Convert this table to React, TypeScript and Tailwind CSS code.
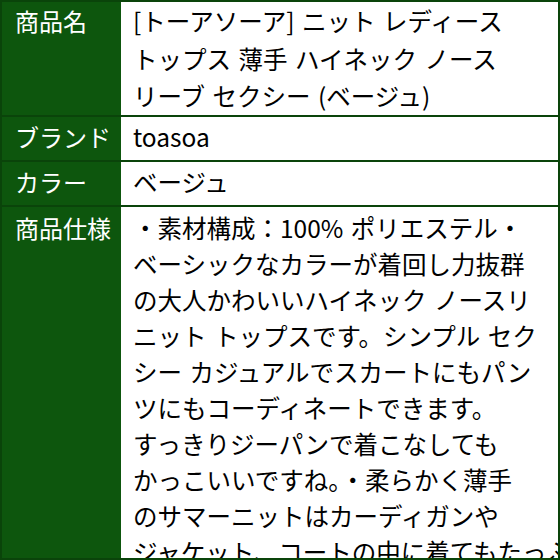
const rows: { label: string; lines: string[]; lead: string; pad: string }[] = [
  {
    label: '商品名',
    lines: ['[トーアソーア] ニット レディース', 'トップス 薄手 ハイネック ノース', 'リーブ セクシー (ベージュ)'],
    lead: 'leading-[37.5px]',
    pad: 'py-0',
  },
  { label: 'ブランド', lines: ['toasoa'], lead: 'leading-[37px]', pad: 'pt-[1px] pb-[5px]' },
  { label: 'カラー', lines: ['ベージュ'], lead: 'leading-[37px]', pad: 'pt-[1px] pb-[5px]' },
  {
    label: '商品仕様',
    lines: [
      '・素材構成：100% ポリエステル・',
      'ベーシックなカラーが着回し力抜群',
      'の大人かわいいハイネック ノースリ',
      'ニット トップスです。シンプル セク',
      'シー カジュアルでスカートにもパン',
      'ツにもコーディネートできます。',
      'すっきりジーパンで着こなしても',
      'かっこいいですね。・柔らかく薄手',
      'のサマーニットはカーディガンや',
      'ジャケット、コートの中に着てもたっぷり',
    ],
    lead: 'leading-[36px]',
    pad: 'pt-[3px]',
  },
]

export default function App() {
  return (
    <div
      className="w-[560px] h-[560px] overflow-hidden border-2 border-[#0a440a] bg-white"
      style={{ fontFamily: '"Noto Sans CJK JP", "Noto Sans", sans-serif' }}
    >
      {rows.map((r, i) => (
        <div
          key={r.label}
          className={`grid grid-cols-[119px_1fr] ${i < rows.length - 1 ? 'border-b-2 border-[#0a440a]' : ''}`}
        >
          <div className={`bg-[#0d560d] text-white text-[24px] pl-[13px] ${r.lead} ${r.pad}`}>{r.label}</div>
          <div className={`bg-white text-black text-[24.5px] [word-spacing:2px] pl-3 ${r.lead} ${r.pad}`}>
            {r.lines.map(l => (
              <div key={l} className="whitespace-nowrap">
                {l}
              </div>
            ))}
          </div>
        </div>
      ))}
    </div>
  )
}
